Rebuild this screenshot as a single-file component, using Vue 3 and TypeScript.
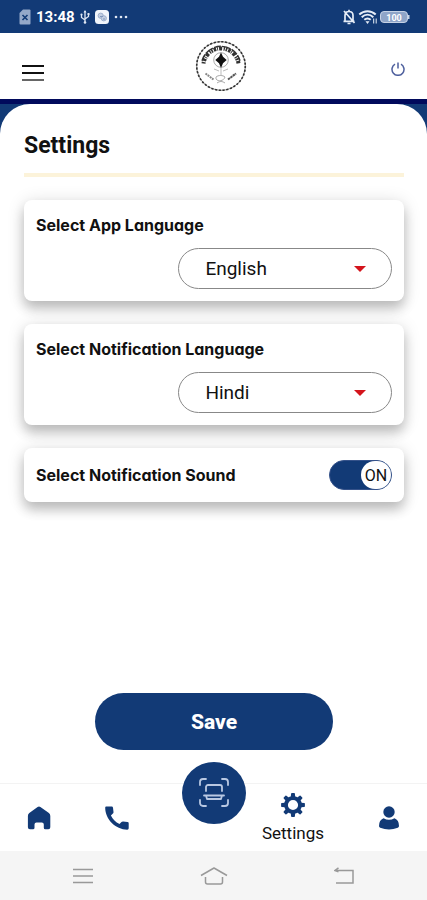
<script setup lang="ts">
import { ref } from 'vue'

const languages: string[] = ['English', 'Hindi']
const appLanguage = ref<string>('English')
const notificationLanguage = ref<string>('Hindi')
const soundOn = ref<boolean>(true)
const teeth: number[] = [0, 45, 90, 135, 180, 225, 270, 315]
</script>

<template>
  <div class="screen">
    <div class="status">
      <div class="status-group">
        <svg width="12" height="16" viewBox="0 0 12 16" aria-hidden="true">
          <path d="M4 0.5h6.500a1 1 0 0 1 1 1v13a1 1 0 0 1-1 1h-9a1 1 0 0 1-1-1V4z" fill="#94a8c8" />
          <path d="M3.500 6l5 5M8.500 6l-5 5" stroke="#123a76" stroke-width="1.600" />
        </svg>
        <span class="clock">13:48</span>
        <svg width="10" height="16" viewBox="0 0 10 16" fill="none" stroke="#dfe7f3" stroke-width="1.300" aria-hidden="true">
          <path d="M5 2v11M1.500 6v2.500L5 11M8.500 5v2.500L5 10" />
          <path d="M3.500 3.500L5 1l1.500 2.500z" fill="#dfe7f3" stroke="none" />
          <circle cx="5" cy="13.500" r="1.300" fill="#dfe7f3" stroke="none" />
          <circle cx="1.500" cy="5.500" r="1.100" fill="#dfe7f3" stroke="none" />
          <path d="M7.500 4h2v2h-2z" fill="#dfe7f3" stroke="none" />
        </svg>
        <svg width="14" height="14" viewBox="0 0 14 14" aria-hidden="true">
          <rect width="14" height="14" rx="3.500" fill="#f1f5fb" />
          <circle cx="5.700" cy="5.700" r="2.600" fill="#c3cfe2" stroke="#9fb0cd" />
          <circle cx="8.800" cy="8.300" r="2.600" fill="#c3cfe2" stroke="#9fb0cd" />
          <path d="M5 6.500h3M8 9h2" stroke="#7e95bb" />
        </svg>
        <svg width="14" height="4" viewBox="0 0 14 4" fill="#dfe7f3" aria-hidden="true">
          <circle cx="2" cy="2" r="1.300" /><circle cx="7" cy="2" r="1.300" /><circle cx="12" cy="2" r="1.300" />
        </svg>
      </div>
      <div class="status-group right">
        <svg width="14" height="16" viewBox="0 0 14 16" fill="none" stroke="#e6edf7" stroke-width="1.700" aria-hidden="true">
          <path d="M3 12V6.500C3 4 4.500 2.500 7 2.500S11 4 11 6.500V12M1.500 12.300h11M7 .8v1.700M5.500 14.500h3M2 2l10.500 12" />
        </svg>
        <svg width="20" height="16" viewBox="0 0 20 16" fill="none" stroke="#e6edf7" stroke-width="2" aria-hidden="true">
          <path d="M1.300 5.500C6 1 13 1 17.700 5.500M3.700 8.200c3.500-3.200 8.100-3.200 11.600 0M6.300 10.800c2-1.700 4.400-1.700 6.400 0" />
          <path d="M7.500 12.200h4L9.500 15z" fill="#e6edf7" stroke="none" />
          <path d="M15.700 9.500v5M18.200 14.500v-5" stroke-width="1" />
        </svg>
        <svg width="30" height="12" viewBox="0 0 30 12" aria-hidden="true">
          <rect x=".5" y=".5" width="27" height="11" rx="3.500" fill="#8fa5c8" stroke="#c6d2e5" />
          <path d="M28.500 4v4" stroke="#c6d2e5" stroke-width="2" />
          <text x="14" y="9.500" text-anchor="middle" class="battery">100</text>
        </svg>
      </div>
    </div>

    <header class="header">
      <button class="icon-button menu" type="button" aria-label="Menu">
        <svg width="22" height="18" viewBox="0 0 22 18" fill="none" stroke-width="2">
          <path d="M0 2h22M0 9h22" stroke="#111" />
          <path d="M0 16h22" stroke="#666" />
        </svg>
      </button>
      <svg class="emblem" width="52" height="52" viewBox="0 0 52 52" fill="none" aria-hidden="true">
        <circle cx="26" cy="26" r="24.300" stroke="#888" stroke-width="1" />
        <circle cx="26" cy="26" r="24.300" stroke="#333" stroke-width="1.600" stroke-dasharray="2.200 1.600" />
        <path d="M8.500 23.500A17.700 17.700 0 0 1 43.500 23.500" stroke="#333" stroke-width="4" stroke-dasharray="1.600 1 2.600 .9 .9 1.100 3.200 1.500 1.300 .8" />
        <path d="M7 20.800A19.700 19.700 0 0 1 45 20.800" stroke="#333" stroke-width="1.400" stroke-dasharray="7 1.200 9 1.200" />
        <circle cx="26" cy="20" r="7.300" fill="#fff" stroke="#aaa" stroke-width="1" />
        <path d="M26 12.500l2 4.200 3.700 3.300-3.700 3.300L26 28l-2-4.700-3.700-3.300 3.700-3.300z" fill="#111" />
        <path d="M26 28v8M19 29l5 2M33 29l-5 2" stroke="#bbb" />
        <path d="M10.500 33.500l8 6" stroke="#888" stroke-width="2" stroke-dasharray="2 .7" />
        <path d="M33 39.500l8-6" stroke="#555" stroke-width="2" stroke-dasharray="2.500 .5" />
        <path d="M21 37c2-2 7-2 9 0-1 4-7 5-9 2zM22 43c3-2 5-2 8 0" stroke="#aaa" />
      </svg>
      <button class="icon-button power" type="button" aria-label="Log out">
        <svg width="14" height="14" viewBox="0 0 14 14" fill="none" stroke="#4d5f9d" stroke-width="1.500">
          <path d="M4 2.100a6 6 0 1 0 6 0M7 .5v6" />
        </svg>
      </button>
    </header>

    <div class="backdrop">
      <main class="panel">
        <h1 class="title">Settings</h1>

        <form class="form" @submit.prevent>
          <section class="card">
            <label class="label" for="app-language">Select App Language</label>
            <div class="picker">
              <select id="app-language" v-model="appLanguage">
                <option v-for="name in languages" :key="name">{{ name }}</option>
              </select>
            </div>
          </section>

          <section class="card">
            <label class="label" for="notification-language">Select Notification Language</label>
            <div class="picker">
              <select id="notification-language" v-model="notificationLanguage">
                <option v-for="name in languages" :key="name">{{ name }}</option>
              </select>
            </div>
          </section>

          <section class="card row">
            <label class="label" for="sound">Select Notification Sound</label>
            <label class="toggle" :class="{ off: !soundOn }">
              <input id="sound" v-model="soundOn" type="checkbox" />
              <span class="knob">{{ soundOn ? 'ON' : 'OFF' }}</span>
            </label>
          </section>

          <button class="save" type="submit">Save</button>
        </form>
      </main>
    </div>

    <nav class="tabs">
      <div class="tab-group">
        <a class="tab" href="#home" aria-label="Home">
          <svg width="24" height="24" viewBox="0 0 24 24" fill="#123a76">
            <path d="M10.600.9q1.400-1 2.800 0l8.500 6.200Q23.300 8.200 23.300 10v11.300q0 2-2 2h-3q-1.500 0-1.500-1.500v-3.300q0-2-2-2H9.500q-2 0-2 2v3.300q0 1.500-1.500 1.500H2.900q-2 0-2-2V10q0-1.800 1.400-2.900z" />
          </svg>
        </a>
        <a class="tab" href="#call" aria-label="Call">
          <svg width="24" height="24" viewBox="0 0 24 24" fill="#123a76">
            <path d="M1.500.5h5.200q1.200 0 1.300 1.200l.5 4.200q.1 1-.6 1.700L5.900 9.500c2 4 4.600 6.600 8.600 8.600l2-2q.7-.7 1.600-.6l4.400.5q1.200.1 1.200 1.300v5q0 1.400-1.400 1.400C10.500 23.500.3 13.500.2 1.800.2.9.7.5 1.500.5z" />
          </svg>
        </a>
      </div>
      <a class="scan" href="#scan" aria-label="Scan">
        <svg width="30" height="30" viewBox="0 0 30 30" fill="none" stroke="#b9c8e2" stroke-width="1.800" stroke-linecap="round" stroke-linejoin="round">
          <path d="M1 7V4a3 3 0 0 1 3-3h3M23 1h3a3 3 0 0 1 3 3v3M29 22v3a3 3 0 0 1-3 3h-3M7 28H4a3 3 0 0 1-3-3v-3" />
          <path d="M7 13V9a2 2 0 0 1 2-2h12a2 2 0 0 1 2 2v4M5 17.500h20M7 17.500l1 3.500h14l1-3.500" />
        </svg>
      </a>
      <div class="tab-group">
        <a class="tab" href="#settings">
          <svg width="24" height="24" viewBox="0 0 24 24" fill="#123a76">
            <circle cx="12" cy="12" r="7" fill="none" stroke="#123a76" stroke-width="3.800" />
            <path v-for="angle in teeth" :key="angle" d="M9.700 4.500L10.100.8q.1-.7.700-.7h2.400q.6 0 .7.700L14.300 4.500z" :transform="`rotate(${angle} 12 12)`" />
          </svg>
          <span>Settings</span>
        </a>
        <a class="tab" href="#profile" aria-label="Profile">
          <svg width="22" height="24" viewBox="0 0 22 24" fill="#123a76">
            <circle cx="11" cy="6" r="5.700" />
            <path d="M5.500 12.200q5.500 3.300 11 0Q21 14 21 20q0 1.200-1.200 1.700-8.800 3.600-17.600 0Q1 21.200 1 20 1 14 5.500 12.200z" />
          </svg>
        </a>
      </div>
    </nav>

    <div class="system">
      <button class="icon-button" type="button" aria-label="Recent apps">
        <svg width="20" height="16" viewBox="0 0 20 16" stroke="#999" stroke-width="1.500"><path d="M0 1.500h20M0 8h20M0 14.500h20" /></svg>
      </button>
      <button class="icon-button" type="button" aria-label="Home screen">
        <svg width="28" height="18" viewBox="0 0 28 18" fill="none" stroke="#999" stroke-width="1.500" stroke-linejoin="round"><path d="M1 8.500L14 1l13 7.500M5.500 10v5q0 2 2 2h13q2 0 2-2v-5" /></svg>
      </button>
      <button class="icon-button" type="button" aria-label="Back">
        <svg width="20" height="18" viewBox="0 0 20 18" fill="none" stroke="#999" stroke-width="1.500"><path d="M1 3.500h18v12.500H2M4.500.8L1 3.500l3.500 1.200" /></svg>
      </button>
    </div>
  </div>
</template>

<style>
body {
  background: #fff;
}
</style>

<style scoped>
.screen {
  display: flex;
  flex-direction: column;
  min-height: 100vh;
  font-family: Roboto, 'Liberation Sans', sans-serif;
  color: #111;
}
.screen * {
  box-sizing: border-box;
}
svg {
  display: block;
  flex: none;
}
.status {
  display: flex;
  justify-content: space-between;
  align-items: center;
  height: 33px;
  padding: 0 17px 0 19px;
  background: #123a76;
}
.status-group {
  display: flex;
  align-items: center;
  gap: 5px;
}
.status-group.right {
  gap: 2px;
}
.clock {
  color: #fff;
  font-size: 15px;
  line-height: 16px;
  font-weight: 700;
}
.battery {
  fill: #fff;
  font-size: 9px;
  font-weight: 700;
}
.header {
  display: flex;
  justify-content: space-between;
  align-items: center;
  height: 66px;
  padding: 0 22px;
  background: #fff;
}
.icon-button {
  display: flex;
  padding: 0;
  border: 0;
  background: none;
  cursor: pointer;
}
.menu {
  padding: 14px 7px 0 0;
}
.power {
  padding-top: 6px;
}
.backdrop {
  display: flex;
  flex: 1;
  border-top: 5px solid #010a5c;
  background: linear-gradient(#123a76 60px, #fff 60px);
}
.panel {
  display: flex;
  flex: 1;
  flex-direction: column;
  padding: 28px 23px 33px 24px;
  border-radius: 30px 30px 0 0;
  background: #fff;
}
.title {
  margin: 0 0 23px;
  padding-bottom: 13px;
  border-bottom: 4px solid #fcf3da;
  font-size: 23px;
  line-height: 28px;
  font-weight: 700;
}
.form {
  display: flex;
  flex: 1;
  flex-direction: column;
  gap: 23px;
}
.card {
  display: flex;
  flex-direction: column;
  gap: 13px;
  padding: 15px 12px 12px;
  border-radius: 8px;
  background: #fff;
  box-shadow: 0 8px 12px rgba(0, 0, 0, 0.2), 0 2px 18px rgba(0, 0, 0, 0.14);
}
.card.row {
  flex-direction: row;
  align-items: center;
  justify-content: space-between;
  padding: 12px;
}
.label {
  font-family: Inter, 'Liberation Sans', sans-serif;
  font-feature-settings: 'cv11';
  font-size: 16px;
  line-height: 20px;
  font-weight: 700;
}
.picker {
  position: relative;
  align-self: flex-end;
  width: 60%;
}
.picker::after {
  content: '';
  position: absolute;
  top: 18px;
  right: 26px;
  border: 6px solid transparent;
  border-top-color: #d4141c;
  border-bottom: 0;
  pointer-events: none;
}
select {
  display: block;
  width: 100%;
  height: 41px;
  padding: 0 44px 0 26px;
  border: 1px solid #888;
  border-radius: 21px;
  appearance: none;
  background: #fff;
  color: #111;
  font-family: inherit;
  font-size: 19px;
}
.toggle {
  display: flex;
  justify-content: flex-end;
  width: 63px;
  height: 30px;
  border: 1px solid #35528a;
  border-radius: 15px;
  background: #123a76;
  cursor: pointer;
}
.toggle.off {
  justify-content: flex-start;
  background: #aaa;
}
.toggle input {
  position: absolute;
  margin: 0;
  opacity: 0;
}
.knob {
  display: flex;
  align-items: center;
  justify-content: center;
  width: 30px;
  border-radius: 14px;
  background: #fff;
  font-size: 16px;
}
.save {
  align-self: center;
  width: 238px;
  height: 57px;
  margin-top: auto;
  border: 0;
  border-radius: 29px;
  background: #123a76;
  color: #fff;
  font-family: inherit;
  font-size: 21px;
  font-weight: 800;
  cursor: pointer;
}
.tabs {
  position: relative;
  display: flex;
  justify-content: space-between;
  height: 68px;
  padding: 0 27px;
  border-top: 1px solid #f3f3f3;
}
.tab-group {
  display: flex;
  align-items: center;
  gap: 54px;
}
.tab {
  display: flex;
  flex-direction: column;
  align-items: center;
  gap: 6px;
  color: #111;
  font-size: 17px;
  line-height: 20px;
  text-decoration: none;
}
.scan {
  position: absolute;
  top: -22px;
  left: 50%;
  display: flex;
  align-items: center;
  justify-content: center;
  width: 64px;
  height: 62px;
  border-radius: 50%;
  background: #123a76;
  transform: translateX(-50%);
}
.system {
  display: flex;
  align-items: center;
  justify-content: space-between;
  height: 49px;
  padding: 0 73px;
  background: #f5f5f5;
}
</style>
